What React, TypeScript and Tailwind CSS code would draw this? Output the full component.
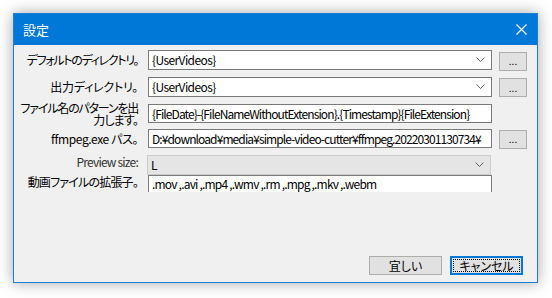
import React from 'react';

function Chevron() {
  return (
    <svg width="9" height="6" viewBox="0 0 9 6" className="shrink-0">
      <path d="M0.5 0.5 L4.5 4.5 L8.5 0.5" fill="none" stroke="#606060" strokeWidth="1" />
    </svg>
  );
}

function Combo({ value, disabled }: { value: string; disabled?: boolean }) {
  return (
    <div
      className={
        'flex h-[20px] w-[344px] items-center justify-between border pl-[3px] pr-[6px] ' +
        (disabled ? 'border-[#cccccc] bg-[#e5e5e5]' : 'border-[#7a7a7a] bg-white')
      }
    >
      <span className="leading-none tracking-[-0.6px]">{value}</span>
      <Chevron />
    </div>
  );
}

function Browse() {
  return (
    <div className="flex h-[19px] w-[28px] items-center justify-center border border-[#adadad] bg-[#e1e1e1] text-[10px] leading-none">
      ...
    </div>
  );
}

function Label({ children }: { children: React.ReactNode }) {
  return (
    <div className="w-[124px] shrink-0 whitespace-nowrap text-right leading-[12px] tracking-[-0.8px]">
      {children}
    </div>
  );
}

export default function App() {
  return (
    <div className="h-[298px] w-[552px] overflow-hidden bg-white pl-[13px] pt-[13px] font-['Noto_Sans_CJK_JP','Noto_Sans',sans-serif] text-[12px] text-black [font-feature-settings:'palt']">
      <div className="flex h-[270px] w-[525px] flex-col border border-[#1a7fd4] bg-[#f0f0f0] shadow-[0_0_14px_rgba(0,0,0,0.35)]">
        <div className="flex h-[31px] shrink-0 items-center justify-between bg-[#0078d7] pl-[9px] pr-[10px] text-white">
          <span className="text-[13px]">設定</span>
          <svg width="11" height="11" viewBox="0 0 11 11">
            <path d="M0.5 0.5 L10.5 10.5 M10.5 0.5 L0.5 10.5" stroke="#ffffff" strokeWidth="1.1" />
          </svg>
        </div>

        <div className="flex flex-1 flex-col pt-[5px]">
          <div className="flex h-[20px] items-center">
            <Label><span className="tracking-[-1.3px]">デフォルトのディレクトリ。</span></Label>
            <div className="ml-[10px]"><Combo value="{UserVideos}" /></div>
            <div className="ml-[7px] mt-[2px]"><Browse /></div>
          </div>

          <div className="mt-[7px] flex h-[20px] items-center">
            <Label><span className="tracking-[-0.2px]">出力ディレクトリ。</span></Label>
            <div className="ml-[10px]"><Combo value="{UserVideos}" /></div>
            <div className="ml-[7px] mt-[1px]"><Browse /></div>
          </div>

          <div className="mt-[7px] flex h-[19px] items-center">
            <Label>
              <span className="block tracking-[-1.2px]">ファイル名のパターンを出</span>
              <span className="block">力します。</span>
            </Label>
            <div className="ml-[10px] flex h-[19px] w-[344px] items-center overflow-hidden whitespace-nowrap border border-[#7a7a7a] bg-white pl-[3px] leading-none tracking-[-0.9px]">
              {'{FileDate}-{FileNameWithoutExtension}.{Timestamp}{FileExtension}'}
            </div>
          </div>

          <div className="mt-[6px] flex h-[19px] items-center">
            <Label><span className="tracking-[-0.4px]">ffmpeg.exe パス。</span></Label>
            <div className="ml-[10px] flex h-[19px] w-[344px] items-center overflow-hidden whitespace-nowrap border border-[#7a7a7a] bg-white pl-[3px] leading-none tracking-[-0.9px]">
              D:¥download¥media¥simple-video-cutter¥ffmpeg.20220301130734¥
            </div>
            <div className="ml-[7px] mt-[1px]"><Browse /></div>
          </div>

          <div className="mt-[7px] flex h-[20px] items-center">
            <Label><span className="relative -top-[3px] text-[#333333]">Preview size:</span></Label>
            <div className="ml-[9px]"><Combo value="L" disabled /></div>
          </div>

          <div className="flex h-[17px] items-start">
            <Label><span className="relative top-[1px]">動画ファイルの拡張子。</span></Label>
            <div className="ml-[10px] h-[17px] w-[344px] overflow-hidden whitespace-pre border-x border-t border-[#7a7a7a] bg-white pl-[3px] pt-[2px] leading-none tracking-[-0.8px]">
              .mov ,.avi ,.mp4 ,.wmv ,.rm ,.mpg ,.mkv ,.webm
            </div>
          </div>

          <div className="mt-auto mb-[7px] flex justify-end gap-[8px] pr-[14px]">
            <div className="flex h-[19px] w-[73px] items-center justify-center border border-[#adadad] bg-[#e1e1e1] leading-none">
              宜しい
            </div>
            <div className="flex h-[19px] w-[73px] border-2 border-[#0078d7] bg-[#e1e1e1] p-px">
              <div className="flex flex-1 items-center justify-center border border-dotted border-black leading-none">
                キャンセル
              </div>
            </div>
          </div>
        </div>
      </div>
    </div>
  );
}
